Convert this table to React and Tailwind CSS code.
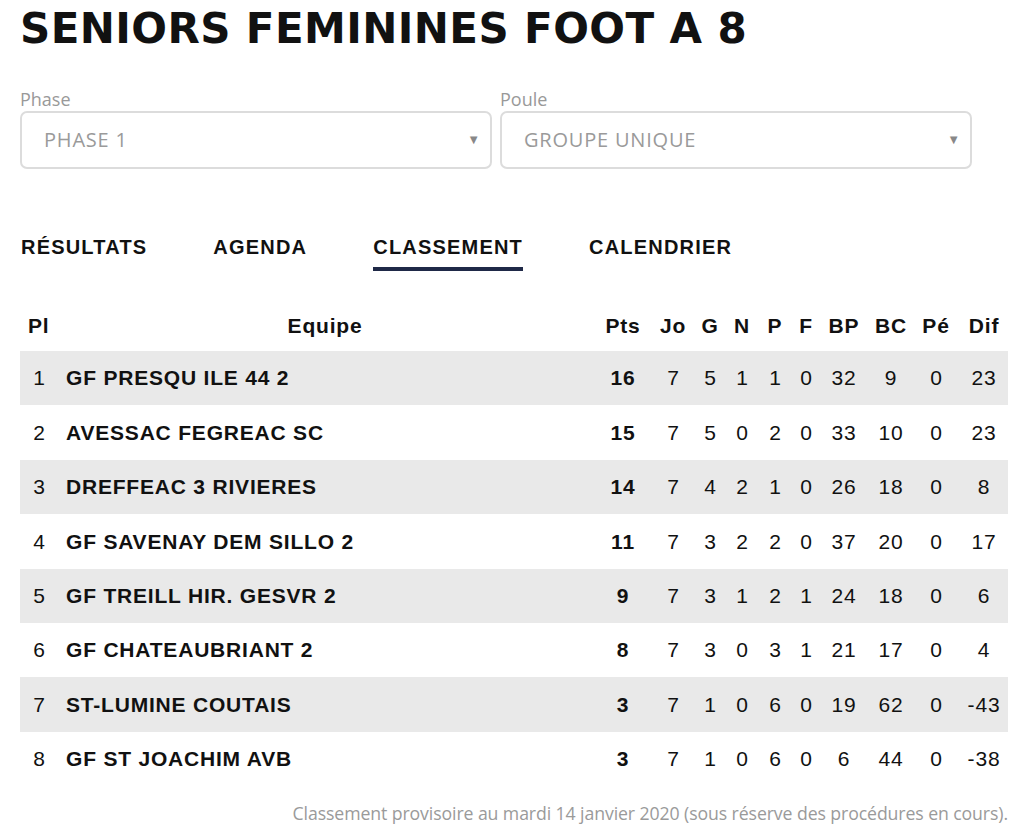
import React from 'react'

const rows = [
  { pl: 1, team: 'GF PRESQU ILE 44 2', pts: 16, jo: 7, g: 5, n: 1, p: 1, f: 0, bp: 32, bc: 9, pe: 0, dif: 23 },
  { pl: 2, team: 'AVESSAC FEGREAC SC', pts: 15, jo: 7, g: 5, n: 0, p: 2, f: 0, bp: 33, bc: 10, pe: 0, dif: 23 },
  { pl: 3, team: 'DREFFEAC 3 RIVIERES', pts: 14, jo: 7, g: 4, n: 2, p: 1, f: 0, bp: 26, bc: 18, pe: 0, dif: 8 },
  { pl: 4, team: 'GF SAVENAY DEM SILLO 2', pts: 11, jo: 7, g: 3, n: 2, p: 2, f: 0, bp: 37, bc: 20, pe: 0, dif: 17 },
  { pl: 5, team: 'GF TREILL HIR. GESVR 2', pts: 9, jo: 7, g: 3, n: 1, p: 2, f: 1, bp: 24, bc: 18, pe: 0, dif: 6 },
  { pl: 6, team: 'GF CHATEAUBRIANT 2', pts: 8, jo: 7, g: 3, n: 0, p: 3, f: 1, bp: 21, bc: 17, pe: 0, dif: 4 },
  { pl: 7, team: 'ST-LUMINE COUTAIS', pts: 3, jo: 7, g: 1, n: 0, p: 6, f: 0, bp: 19, bc: 62, pe: 0, dif: -43 },
  { pl: 8, team: 'GF ST JOACHIM AVB', pts: 3, jo: 7, g: 1, n: 0, p: 6, f: 0, bp: 6, bc: 44, pe: 0, dif: -38 },
]

const cols = 'grid grid-cols-[38px_534px_62px_38px_36px_28px_38px_24px_52px_42px_48px_48px] items-center'
const heads = ['Pts', 'Jo', 'G', 'N', 'P', 'F', 'BP', 'BC', 'Pé', 'Dif']
const tabs = ['RÉSULTATS', 'AGENDA', 'CLASSEMENT', 'CALENDRIER']

function Select({ label, value }) {
  return (
    <div className="w-[472px]">
      <p className="text-[18px] leading-[24px] text-[#999] font-['Open_Sans',sans-serif]">{label}</p>
      <div className="h-[58px] rounded-[7px] border-2 border-[#dcdcdc] flex items-center justify-between pl-[22px] pr-[10px]">
        <span className="text-[20px] text-[#9a9a9a] font-['Open_Sans',sans-serif] tracking-[0.8px]">{value}</span>
        <span className="text-[13px] text-[#888]">▼</span>
      </div>
    </div>
  )
}

export default function App() {
  return (
    <div className="w-[1024px] h-[836px] bg-white px-[20px] overflow-hidden">
      <h1 className="pt-[4px] text-[42px] leading-[50px] font-bold text-[#111] font-['DejaVu_Sans',sans-serif] tracking-[0.4px] whitespace-nowrap">
        SENIORS FEMININES FOOT A 8
      </h1>

      <div className="flex gap-[8px] mt-[33px]">
        <Select label="Phase" value="PHASE 1" />
        <Select label="Poule" value="GROUPE UNIQUE" />
      </div>

      <div className="flex gap-[66px] mt-[65px] ml-[1px]">
        {tabs.map(t => (
          <div key={t} className="flex flex-col">
            <span className="text-[20px] leading-[26px] font-bold text-[#111] font-['Liberation_Sans',sans-serif] tracking-[1.2px]">{t}</span>
            {t === 'CLASSEMENT'
              ? <span className="mt-[7px] h-[4px] bg-[#1f2947]" />
              : <span className="mt-[7px] h-[4px]" />}
          </div>
        ))}
      </div>

      <div className="mt-[30px] w-[988px] font-['Liberation_Sans',Arial,sans-serif] text-[21px] text-[#111]">
        <div className={`${cols} h-[50px] font-bold`}>
          <span className="pl-[8px] tracking-[0.8px]">Pl</span>
          <span className="text-center tracking-[0.8px]">Equipe</span>
          {heads.map(h => <span key={h} className="text-center tracking-[0.8px]">{h}</span>)}
        </div>
        {rows.map((r, i) => (
          <div key={r.pl} className={`${cols} h-[54.4px] ${i % 2 === 0 ? 'bg-[#e9e9e9]' : 'bg-white'}`}>
            <span className="text-center">{r.pl}</span>
            <span className="font-bold pl-[8px] tracking-[0.8px]">{r.team}</span>
            <span className="text-center font-bold tracking-[0.8px]">{r.pts}</span>
            <span className="text-center">{r.jo}</span>
            <span className="text-center">{r.g}</span>
            <span className="text-center">{r.n}</span>
            <span className="text-center">{r.p}</span>
            <span className="text-center">{r.f}</span>
            <span className="text-center tracking-[0.8px]">{r.bp}</span>
            <span className="text-center tracking-[0.8px]">{r.bc}</span>
            <span className="text-center">{r.pe}</span>
            <span className="text-center tracking-[0.8px]">{r.dif}</span>
          </div>
        ))}
      </div>

      <p className="mt-[14px] w-[988px] text-right text-[17.7px] text-[#9a9a9a] font-['Open_Sans',sans-serif] tracking-[-0.1px]">
        Classement provisoire au mardi 14 janvier 2020 (sous réserve des procédures en cours).
      </p>
    </div>
  )
}
